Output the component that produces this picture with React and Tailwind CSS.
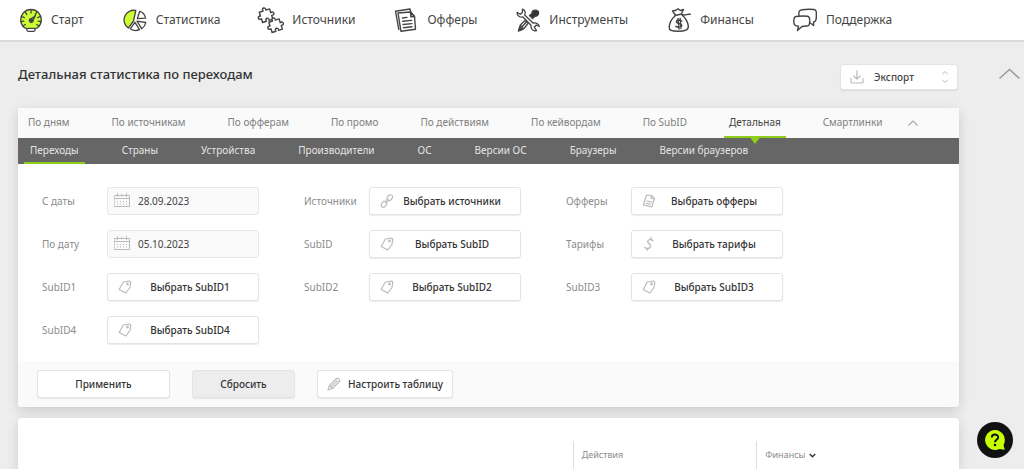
import React from 'react';

function Svg({ box = 24, className = '', children, width = 1.5 }) {
  return (
    <svg
      viewBox={`0 0 ${box} ${box}`}
      className={`shrink-0 ${className}`}
      fill="none"
      stroke="currentColor"
      strokeWidth={width}
      strokeLinecap="round"
      strokeLinejoin="round"
      aria-hidden="true"
    >
      {children}
    </svg>
  );
}

const GaugeIcon = () => (
  <Svg className="size-6" width={1.3}>
    <path d="M6.5 19.800A10.300 10.300 0 1 1 19.500 19.800Q13 22 6.500 19.800Z" fill="#cdfd33" />
    <path d="M13 2v3M7.300 4.200l1.500 2.400M18.700 4.200l-1.500 2.400M3.800 8.500l2.500 1.200M22.200 8.500l-2.500 1.200M3 13.500l2.800-.3M23 13.500l-2.800-.3M5 18l2.300-1.500M21 18l-2.300-1.500" />
    <path d="M17.500 7.500L14 10.600a2 2 0 1 0 1.200 1.200z" fill="#cdfd33" />
    <circle cx="13.400" cy="12.400" r="1" fill="#333" />
    <rect x="8.800" y="20.300" width="8.400" height="3" rx="1.500" fill="#fff" />
  </Svg>
);

const PieIcon = () => (
  <Svg className="size-6" width={1.3}>
    <path d="M12.800 2.500A9.700 9.700 0 0 0 5.300 20L10.500 13z" fill="#cdfd33" />
    <path d="M12 14.300L7.200 20.800A9.800 9.800 0 0 0 16.500 21.700zM14 13.200L22.800 14.500A9.500 9.500 0 0 1 18.700 20.700zM14.300 10.700L16.700 3.300Q21.500 4.500 22.600 10.200z" />
  </Svg>
);

const puzzlePiece =
  'M1 4H4.300C3.300 1 7.700 1 6.700 4H10V7.300C13 6.300 13 10.700 10 9.700V13H6.700C7.700 10 3.300 10 4.300 13H1V9.700C-2 10.700-2 6.300 1 7.300z';

const PuzzleIcon = () => (
  <Svg className="size-6 overflow-visible" width={1.2}>
    <path d={puzzlePiece} transform="translate(.5 -2.500) scale(1.200) rotate(-18 5.500 8.500)" />
    <path d={puzzlePiece} transform="translate(10 7.500) scale(1.200) rotate(-18 5.500 8.500)" fill="#fff" />
  </Svg>
);

const OffersIcon = () => (
  <Svg className="size-6" width={1.4}>
    <path d="M4.800 21.500L1.500 3.200L16 1L16.700 4" />
    <path d="M4 5L16.500 4L20.500 8.500L21.500 21.300L7 23.300Z" />
    <path d="M16.500 4L16.800 8.700L20.500 8.500z" fill="#bbb" />
    <path d="M8.500 10l4.500-.6M8.700 13.300l9-.9M9 16.500l9-.9M9.500 19.700l8.500-1" />
  </Svg>
);

const ToolsIcon = () => (
  <Svg className="size-6" width={1.3}>
    <path d="M6.500 1.200C9.500 2 9.500 5 8.700 7L17 15C20 14.200 23 16 23.300 18.500L20.300 17L18.300 19L20.500 22.600C17 23.400 14.500 21 15 17.300L7 9C4 9.600 1 7.700 1 4.300L4.300 6.300L6.300 4.500z" />
    <path d="M13.500 7.500L16 5.500C15.500 2.500 19 1 22.500 3.500C23 6.500 21.500 8.500 19 8.200L16.500 10.500z" fill="#333" />
    <path d="M9 12.500L12 15.500L7.500 21L2.500 23L4.300 17zM4.300 17L7.500 21M10.200 14.200L6.200 18.500" />
    <path d="M2.500 23L3.800 19L6.500 21.500z" fill="#333" />
  </Svg>
);

const MoneyIcon = () => (
  <Svg className="size-6" width={1.4}>
    <path d="M8 6.500L5.500 3L9 2.200L11 .8L13.500 2.500L16.500 1.500L14.500 5.500M8 7.500L14.700 6M15 6.300C18 8.500 20 5.500 23.200 6.300" />
    <path d="M8 8C4.500 11 2.500 15 2.200 19C2 22.500 4.500 23.300 11 23.300C18 23.300 21.800 22 21.300 17.800C20.500 13 18 9.500 15 7" />
    <path d="M15 13C12 11.300 9 12 9.500 14C10 16 14.600 15 14.800 17.400C14.800 19.500 11 19.700 8.800 18.300M11 10.500L12 21M13.200 10.500L14 20.500" />
  </Svg>
);

const ChatIcon = () => (
  <Svg className="size-6" width={1.4}>
    <path d="M6 8.200C5.500 3.500 6 2 9 1.700Q15 .8 21 1.500C23.500 2 23.500 4 23.300 8C23.500 11.500 22.500 13.700 20.500 14L20.700 17.500L17.300 15" />
    <path d="M3 8.500Q9 7.500 14.500 8.300C16.500 8.600 16.800 10.500 16.700 13C16.800 16.500 16 18 13.500 18L9 18.500L4.500 22.500L5.500 18.200C1.500 18 .8 16.500 .8 13C.8 10 1 8.800 3 8.500z" />
  </Svg>
);

const CalendarIcon = () => (
  <Svg box={16} className="size-4" width={1}>
    <path d="M.5 2.500h15v11H.5zM.5 5.500h15M3.500 .5v3M12.500 .5v3M8 1v2" />
    <path d="M3 8.500h10M3 11h10" strokeDasharray="1 2" strokeLinecap="butt" />
  </Svg>
);

const TagIcon = () => (
  <Svg box={14} className="size-3.5" width={1.2}>
    <path d="M5.300 2L11.500 1L12.800 2.500L12 7.500L7.800 13L1.200 9.500z" />
    <circle cx="9.500" cy="4" r=".8" />
  </Svg>
);

const LinkIcon = () => (
  <Svg box={14} className="size-3.5" width={1.2}>
    <ellipse cx="9.700" cy="3.700" rx="2.300" ry="3.300" transform="rotate(38 9.700 3.700)" />
    <ellipse cx="4" cy="10.300" rx="2.300" ry="3.300" transform="rotate(38 4 10.300)" />
    <path d="M5.500 8.500L8.300 5.500" />
  </Svg>
);

const DocIcon = () => (
  <Svg box={14} className="size-3.5" width={1.2}>
    <path d="M4.500 1L9.500 1.500L12.500 4.500L9.800 13L1.500 10.800z" />
    <path d="M9.500 1.500L9 4.500L12.300 5M5 7l4.500 1.200M4.500 9.300l4 1" />
  </Svg>
);

const DollarIcon = () => (
  <Svg box={14} className="size-3.5" width={1.4}>
    <path d="M11 3.500C8.500 1.700 5.500 2.500 5.800 4.800C6.200 7 9 7 8.500 9.300C8 11.800 5 12.200 2.800 10.500M9 .8L8.300 2.500M5.500 11.500L5 13.200" />
  </Svg>
);

const PencilIcon = () => (
  <Svg box={14} className="size-3.5" width={1.2}>
    <path d="M1 13L2.500 8.500L9.500 1.500Q12.500 .5 12.800 4L5.500 11.500zM2.500 8.500L5.500 11.500M4.800 9.200L10.300 3.700" />
  </Svg>
);

const DownloadIcon = () => (
  <Svg box={14} className="size-3.5" width={1.2}>
    <path d="M7 .8v8.200M3.800 6L7 9.200L10.200 6M1 8.500v3.500q0 1 1 1h10q1 0 1-1V8.500" />
  </Svg>
);

const nav = [
  ['Старт', GaugeIcon],
  ['Статистика', PieIcon],
  ['Источники', PuzzleIcon],
  ['Офферы', OffersIcon],
  ['Инструменты', ToolsIcon],
  ['Финансы', MoneyIcon],
  ['Поддержка', ChatIcon],
];

const tabs = [
  'По дням', 'По источникам', 'По офферам', 'По промо', 'По действиям',
  'По кейвордам', 'По SubID', 'Детальная', 'Смартлинки',
];

const subTabs = [
  'Переходы', 'Страны', 'Устройства', 'Производители', 'ОС',
  'Версии ОС', 'Браузеры', 'Версии браузеров',
];

const fields = [
  { id: 'from', label: 'С даты', date: '28.09.2023' },
  { id: 'sources', label: 'Источники', text: 'Выбрать источники', Icon: LinkIcon },
  { id: 'offers', label: 'Офферы', text: 'Выбрать офферы', Icon: DocIcon },
  { id: 'to', label: 'По дату', date: '05.10.2023' },
  { id: 'subid', label: 'SubID', text: 'Выбрать SubID', Icon: TagIcon },
  { id: 'tariffs', label: 'Тарифы', text: 'Выбрать тарифы', Icon: DollarIcon },
  { id: 'subid1', label: 'SubID1', text: 'Выбрать SubID1', Icon: TagIcon },
  { id: 'subid2', label: 'SubID2', text: 'Выбрать SubID2', Icon: TagIcon },
  { id: 'subid3', label: 'SubID3', text: 'Выбрать SubID3', Icon: TagIcon },
  { id: 'subid4', label: 'SubID4', text: 'Выбрать SubID4', Icon: TagIcon },
];

const buttonBase =
  'flex h-7 items-center rounded-[3px] border border-[#e4e4e4] text-[10px] font-medium shadow-[0_1px_1px_rgba(0,0,0,0.08)]';

function Field({ id, label, date, text, Icon }) {
  return (
    <div className="flex items-center">
      <label htmlFor={id} className="w-[65px] shrink-0 text-[10px] text-[#8c8c8c]">
        {label}
      </label>
      {date ? (
        <div className="flex h-7 w-[152px] items-center gap-2 rounded-[3px] border border-[#e8e8e8] bg-[#fafafa] pl-[6px] text-[#bbb]">
          <CalendarIcon />
          <input
            id={id}
            type="text"
            defaultValue={date}
            className="w-full min-w-0 bg-transparent text-[10px] text-[#444] outline-none"
          />
        </div>
      ) : (
        <button id={id} type="button" className={`${buttonBase} w-[152px] bg-white px-[10px] text-[#333]`}>
          <span className="text-[#bbb]">
            <Icon />
          </span>
          <span className="flex-1 text-center whitespace-nowrap">{text}</span>
        </button>
      )}
    </div>
  );
}

export default function App() {
  return (
    <div className="flex min-h-screen flex-col bg-[#ededed] font-['Noto_Sans',sans-serif] text-[#333]">
      <header className="border-b-2 border-[#dadada] bg-white">
        <nav className="flex h-10 items-center gap-[39px] pl-[18px]">
          {nav.map(([label, Icon]) => (
            <a key={label} href="#" className="flex items-center gap-[9px] text-[12px] whitespace-nowrap text-[#444]">
              <Icon />
              {label}
            </a>
          ))}
        </nav>
      </header>

      <main className="flex flex-1 flex-col pl-[18px]">
        <div className="flex items-start pt-[22px] pr-1">
          <h1 className="flex-1 text-[13px] leading-5 font-medium">Детальная статистика по переходам</h1>
          <div className="grid h-[26px] w-[118px] items-center rounded-[3px] border border-[#e4e4e4] bg-white shadow-[0_1px_1px_rgba(0,0,0,0.08)] [grid-template-areas:'stack']">
            <span className="pointer-events-none flex items-center justify-between pr-[5px] pl-[9px] text-[#bbb] [grid-area:stack]">
              <DownloadIcon />
              <Svg box={14} className="size-3.5" width={1}>
                <path d="M4.500 4L7 1.500L9.500 4M4.500 10L7 12.500L9.500 10" />
              </Svg>
            </span>
            <select
              aria-label="Экспорт"
              className="h-full w-full appearance-none bg-transparent pl-[33px] text-[10px] font-medium text-[#444] outline-none [grid-area:stack]"
            >
              <option>Экспорт</option>
            </select>
          </div>
          <button type="button" aria-label="Наверх" className="mt-1 ml-[41px] text-[#999]">
            <svg viewBox="0 0 21 12" className="h-3 w-[21px]" fill="none" stroke="currentColor" strokeWidth="1.500" aria-hidden="true">
              <path d="M.5 10.500L10.500 1.500L20.500 10.500" />
            </svg>
          </button>
        </div>

        <section className="mt-[18px] mr-[65px] rounded-b-[4px] bg-white shadow-[0_4px_12px_rgba(0,0,0,0.14)]">
          <nav className="flex h-[30px] gap-8 bg-[#fafafa] pl-[5px] text-[10px]">
            {tabs.map((tab) =>
              tab === 'Детальная' ? (
                <a key={tab} href="#" className="relative flex items-center border-b-2 border-[#8fce1c] px-[5px] text-[#444]">
                  {tab}
                  <svg viewBox="0 0 12 8" className="absolute top-full left-1/2 h-2 w-3 -translate-x-1/2" aria-hidden="true">
                    <path d="M0 0H12L6 8z" fill="#8fce1c" />
                  </svg>
                </a>
              ) : (
                <a key={tab} href="#" className="flex items-center border-b-2 border-transparent px-[5px] whitespace-nowrap text-[#808080]">
                  {tab}
                </a>
              ),
            )}
            <button type="button" aria-label="Свернуть" className="-ml-[11px] text-[#aaa]">
              <svg viewBox="0 0 10 6" className="h-1.5 w-[10px]" fill="none" stroke="currentColor" strokeWidth="1.200" aria-hidden="true">
                <path d="M.5 5.500L5 1L9.500 5.500" />
              </svg>
            </button>
          </nav>
          <nav className="flex h-[26px] gap-[31px] bg-[#666] pl-[6px] text-[10px] text-[#e4e4e4]">
            {subTabs.map((tab, i) => (
              <a
                key={tab}
                href="#"
                className={`flex items-center border-b-2 px-[6px] whitespace-nowrap ${i === 0 ? 'border-[#8fce1c]' : 'border-transparent'}`}
              >
                {tab}
              </a>
            ))}
          </nav>

          <form>
            <div className="grid grid-cols-[repeat(3,217px)] gap-x-[45px] gap-y-[15px] pt-[23px] pb-[17px] pl-6">
              {fields.map((f) => (
                <Field key={f.id} {...f} />
              ))}
            </div>
            <div className="flex gap-[22px] rounded-b-[4px] bg-[#fafafa] py-[9px] pl-[19px]">
              <button type="button" className={`${buttonBase} w-[133px] justify-center bg-white`}>
                Применить
              </button>
              <button type="button" className={`${buttonBase} w-[103px] justify-center bg-[#ededed]`}>
                Сбросить
              </button>
              <button type="button" className={`${buttonBase} w-[136px] justify-center gap-[7px] bg-white whitespace-nowrap`}>
                <span className="text-[#bbb]">
                  <PencilIcon />
                </span>
                Настроить таблицу
              </button>
            </div>
          </form>
        </section>

        <section className="mt-[11px] mr-[65px] flex-1 rounded-t-[4px] bg-white pt-[23px] shadow-[0_4px_12px_rgba(0,0,0,0.14)]">
          <table className="w-full table-fixed border-collapse text-[9px] text-[#8c8c8c]">
            <thead>
              <tr className="h-7 text-left">
                <td className="w-[59%]" />
                <th scope="col" className="w-[19.5%] border-l border-[#ddd] pl-2 font-normal">
                  Действия
                </th>
                <th scope="col" className="border-l border-[#ddd] pl-2 font-normal">
                  <button type="button" className="flex items-center gap-1">
                    Финансы
                    <svg viewBox="0 0 7 5" className="h-[5px] w-[7px] text-[#333]" fill="none" stroke="currentColor" strokeWidth="1.300" aria-hidden="true">
                      <path d="M.7 1L3.500 3.800L6.300 1" />
                    </svg>
                  </button>
                </th>
              </tr>
            </thead>
          </table>
        </section>
      </main>

      <button
        type="button"
        aria-label="Помощь"
        className="fixed right-[11px] bottom-[11px] flex size-9 items-center justify-center rounded-full bg-[#111]"
      >
        <svg viewBox="0 0 20 20" className="size-5" aria-hidden="true">
          <path d="M10 0A10 10 0 1 0 14.500 19L19.700 19.700L18.500 15A10 10 0 0 0 10 0z" fill="#c8ff00" />
          <path d="M6.800 7.500C6.800 3.500 13.200 3.500 13.200 7.300C13.200 9.800 10 9.800 10 12.200" fill="none" stroke="#111" strokeWidth="2" />
          <circle cx="10" cy="15" r="1.300" fill="#111" />
        </svg>
      </button>
    </div>
  );
}
